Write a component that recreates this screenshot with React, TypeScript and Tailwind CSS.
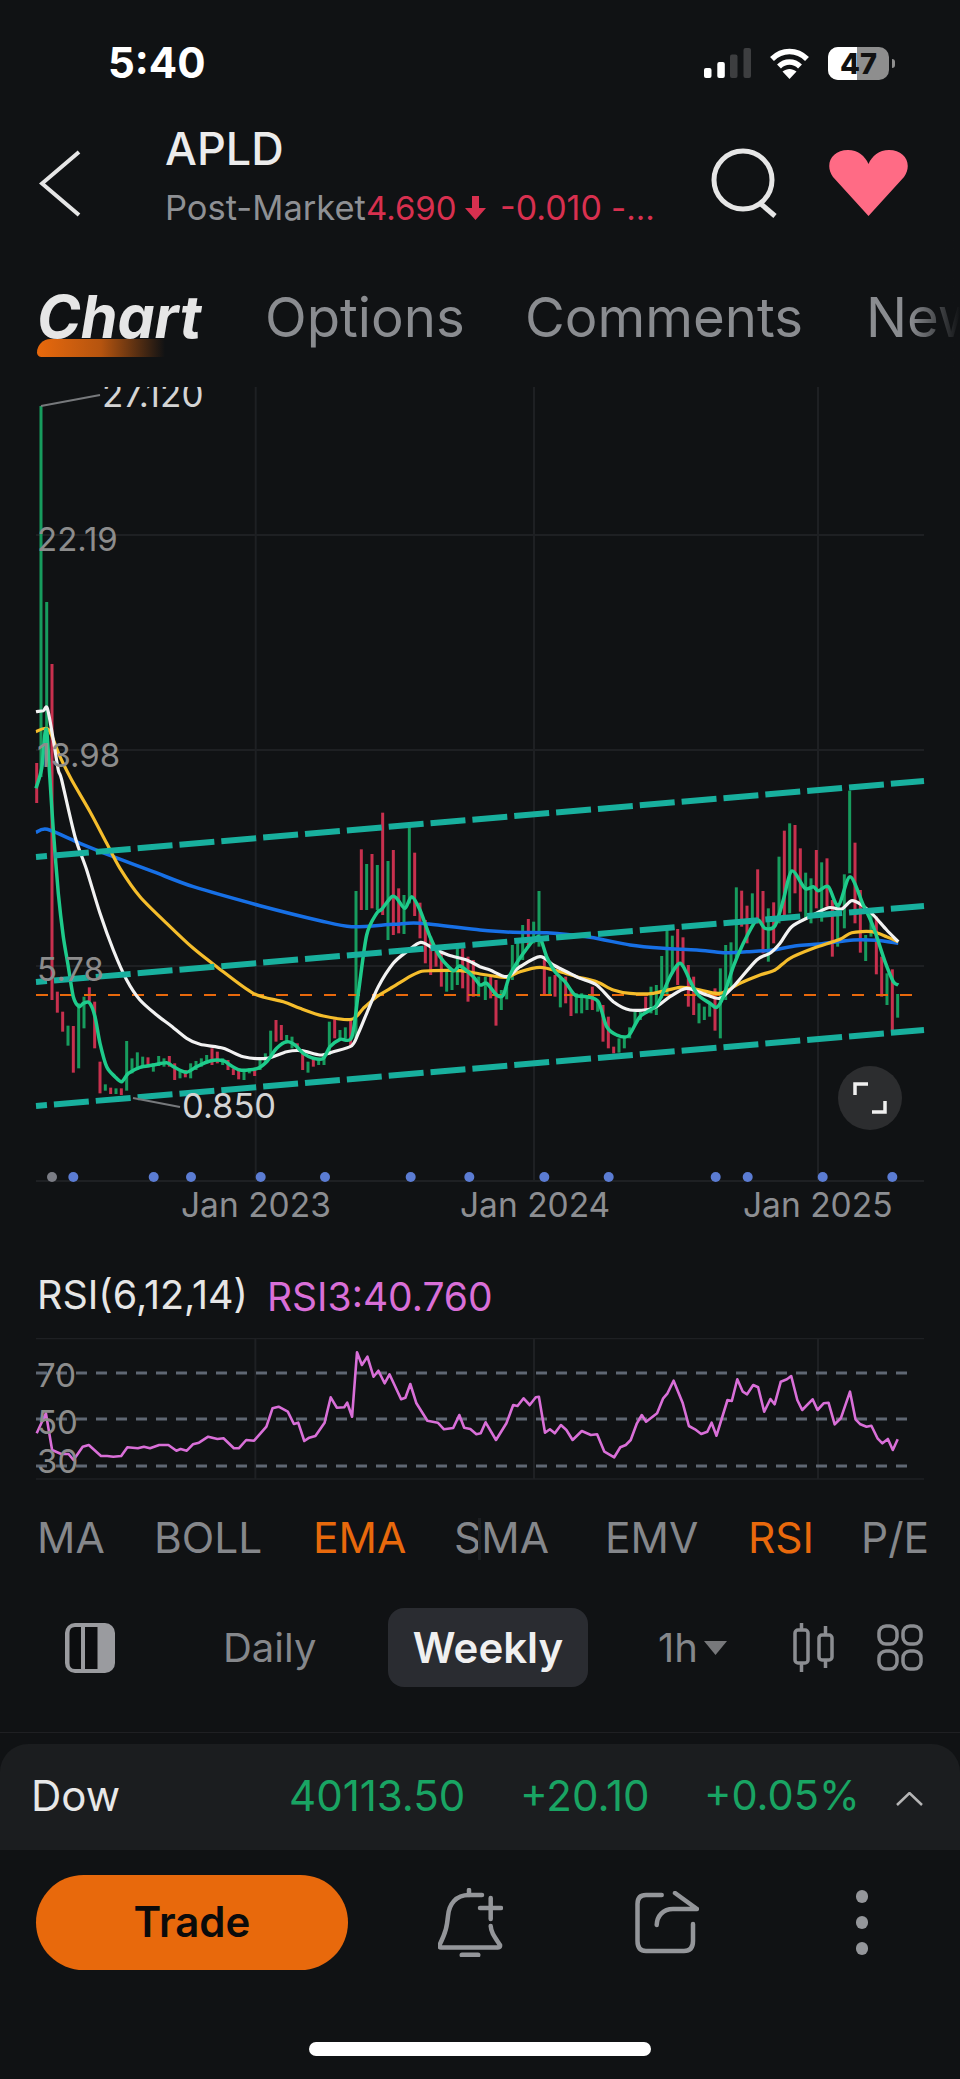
import React from "react";

type Pt = [number, number];
const z2 = (a: number[]): Pt[] => chunk(a).map(([x, y]) => [x / 3, y / 3 + 380]);
const z4 = (a: number[]): Pt[] => chunk(a).map(([x, y]) => [x / 3, y / 3 + 780]);
const z3 = (a: number[]): Pt[] => chunk(a).map(([x, y]) => [x / 3 + 480, y / 3 + 740]);
const z5 = (a: number[]): Pt[] => chunk(a).map(([x, y]) => [x / 1.633, y / 3 + 1250]);
function chunk(a: number[]): Pt[] {
  const out: Pt[] = [];
  for (let i = 0; i < a.length; i += 2) out.push([a[i], a[i + 1]]);
  return out;
}
const pts = (p: Pt[]) => p.map(([x, y]) => `${x.toFixed(1)},${y.toFixed(1)}`).join(" ");
// Catmull-Rom spline through the points, for the moving-average curves
function smooth(p: Pt[]) {
  let d = `M${p[0][0].toFixed(1)} ${p[0][1].toFixed(1)}`;
  for (let i = 0; i < p.length - 1; i++) {
    const a = p[Math.max(i - 1, 0)];
    const b = p[i];
    const c = p[i + 1];
    const e = p[Math.min(i + 2, p.length - 1)];
    const c1x = b[0] + (c[0] - a[0]) / 7;
    const c1y = b[1] + (c[1] - a[1]) / 7;
    const c2x = c[0] - (e[0] - b[0]) / 7;
    const c2y = c[1] - (e[1] - b[1]) / 7;
    d += `C${c1x.toFixed(1)} ${c1y.toFixed(1)} ${c2x.toFixed(1)} ${c2y.toFixed(1)} ${c[0].toFixed(1)} ${c[1].toFixed(1)}`;
  }
  return d;
}

const RED = "#c8304e";
const GRN = "#179c5e";
type B = [number, number, number, "r" | "g"];

const barsA: B[] = [
  [36.7, 763, 803, "r"],
  [41, 406, 777, "g"],
  [46.7, 602, 760, "g"],
  [52, 664, 1000, "r"],
];
const barsZ4: B[] = [
  [172, 635, 698, "r"], [188, 695, 755, "r"], [204, 737, 797, "g"], [220, 738, 878, "r"], [236, 670, 865, "g"],
  [252, 650, 745, "g"], [268, 622, 665, "r"], [284, 665, 805, "r"], [300, 845, 940, "r"], [316, 913, 932, "g"],
  [332, 923, 942, "r"], [348, 925, 942, "g"], [364, 925, 945, "r"], [380, 783, 932, "g"], [396, 835, 880, "g"],
  [412, 817, 870, "g"], [428, 830, 860, "g"], [444, 832, 862, "r"], [460, 850, 875, "g"], [476, 828, 858, "g"],
  [492, 835, 860, "g"], [508, 828, 860, "r"], [524, 850, 900, "r"], [540, 870, 895, "g"], [556, 870, 892, "r"],
  [572, 850, 895, "g"], [588, 843, 870, "g"], [604, 835, 860, "g"], [620, 825, 850, "g"], [636, 805, 855, "r"],
  [652, 815, 850, "r"], [668, 835, 855, "g"], [684, 840, 870, "r"], [700, 865, 885, "r"], [716, 870, 898, "r"],
  [732, 868, 900, "g"], [748, 865, 880, "g"], [764, 865, 888, "r"], [780, 835, 870, "g"], [796, 820, 850, "g"],
  [812, 752, 825, "g"], [828, 720, 785, "r"], [844, 735, 780, "r"], [860, 765, 790, "g"], [876, 770, 805, "g"],
  [892, 790, 815, "r"], [908, 820, 870, "r"], [924, 845, 878, "g"], [940, 835, 860, "r"], [956, 835, 855, "g"],
  [972, 830, 855, "g"], [988, 725, 825, "g"], [1004, 718, 775, "r"], [1020, 750, 780, "g"], [1036, 742, 775, "g"],
  [1052, 720, 800, "r"], [1068, 333, 775, "g"], [1084, 208, 390, "r"], [1100, 252, 390, "g"], [1116, 222, 385, "r"],
  [1132, 255, 390, "g"], [1148, 98, 405, "r"], [1164, 243, 480, "g"], [1180, 210, 465, "r"], [1196, 325, 460, "r"],
  [1212, 345, 462, "g"], [1228, 142, 370, "g"], [1244, 218, 408, "r"], [1260, 368, 475, "r"], [1276, 420, 550, "r"],
  [1292, 470, 585, "r"], [1308, 500, 560, "r"], [1324, 515, 620, "r"], [1340, 570, 635, "g"], [1356, 570, 630, "g"],
  [1372, 500, 615, "g"], [1388, 505, 625, "r"], [1404, 530, 665, "r"], [1420, 540, 650, "r"], [1436, 590, 650, "g"],
];
const barsZ3: B[] = [
  [16, 710, 780, "g"], [32, 710, 775, "r"], [48, 720, 857, "r"], [64, 750, 810, "g"], [80, 735, 778, "g"],
  [97, 615, 720, "g"], [113, 605, 690, "g"], [128, 555, 660, "g"], [145, 537, 615, "r"], [161, 545, 610, "g"],
  [177, 453, 620, "g"], [193, 660, 762, "r"], [209, 710, 765, "g"], [225, 705, 770, "r"], [241, 710, 802, "g"],
  [257, 710, 790, "r"], [273, 750, 828, "r"], [289, 760, 820, "g"], [305, 760, 820, "g"], [321, 765, 810, "g"],
  [337, 740, 810, "r"], [353, 785, 815, "g"], [369, 795, 905, "r"], [385, 830, 925, "r"], [401, 920, 940, "r"],
  [417, 895, 938, "g"], [433, 890, 925, "g"], [449, 862, 895, "g"], [465, 815, 855, "g"], [481, 815, 840, "g"],
  [497, 770, 815, "r"], [513, 740, 820, "g"], [529, 735, 825, "g"], [545, 648, 775, "g"], [561, 570, 765, "g"],
  [577, 587, 700, "g"], [593, 567, 735, "r"], [609, 592, 680, "r"], [625, 675, 800, "r"], [641, 710, 825, "r"],
  [657, 790, 850, "g"], [673, 800, 840, "g"], [689, 790, 830, "g"], [705, 745, 872, "r"], [721, 685, 895, "g"],
  [737, 615, 780, "g"], [753, 607, 745, "g"], [769, 442, 660, "g"], [785, 452, 560, "r"], [801, 497, 610, "r"],
  [817, 460, 545, "g"], [833, 388, 550, "r"], [849, 453, 640, "r"], [865, 505, 665, "g"], [881, 487, 610, "r"],
  [897, 350, 550, "g"], [913, 272, 525, "r"], [929, 250, 520, "g"], [945, 255, 460, "r"], [961, 325, 515, "r"],
  [977, 398, 540, "g"], [993, 415, 550, "g"], [1009, 330, 505, "r"], [1025, 367, 545, "g"], [1041, 355, 500, "r"],
  [1057, 480, 650, "r"], [1073, 490, 620, "g"], [1093, 403, 565, "g"], [1109, 152, 400, "g"], [1125, 308, 550, "r"],
  [1141, 450, 638, "r"], [1157, 585, 663, "g"], [1173, 520, 590, "g"], [1189, 530, 703, "r"], [1205, 650, 770, "r"],
  [1221, 700, 795, "g"], [1237, 688, 870, "r"], [1253, 762, 833, "g"],
];
const allBars: B[] = [
  ...barsA,
  ...barsZ4.map(([x, a, b, c]) => [x / 3, a / 3 + 780, b / 3 + 780, c] as B),
  ...barsZ3.map(([x, a, b, c]) => [x / 3 + 480, a / 3 + 740, b / 3 + 740, c] as B),
];

const greenLine: Pt[] = [
  ...z2([108, 1225, 125, 1165, 135, 1060, 141, 1060, 150, 1200]),
  ...z4([160, 150, 175, 340, 190, 470, 205, 560, 220, 650, 237, 680, 250, 670, 268, 668, 285, 710, 300, 790, 320, 860, 345, 890, 365, 905, 385, 880, 420, 862, 460, 855, 500, 848, 520, 860, 558, 877, 590, 860, 630, 843, 670, 842, 690, 855, 720, 870, 770, 866, 800, 845, 830, 805, 860, 785, 885, 795, 910, 820, 940, 835, 970, 835, 990, 800, 1020, 778, 1055, 772, 1075, 640, 1100, 465, 1130, 400, 1145, 388, 1175, 350, 1190, 355, 1215, 385, 1235, 350, 1260, 390, 1290, 470, 1320, 530, 1360, 572, 1380, 558, 1420, 590, 1440, 615]),
  ...z3([20, 730, 50, 765, 70, 765, 90, 705, 130, 640, 175, 590, 200, 650, 225, 695, 255, 725, 285, 765, 320, 770, 355, 785, 380, 860, 410, 885, 445, 888, 480, 830, 530, 795, 570, 710, 595, 672, 610, 680, 650, 760, 690, 790, 710, 802, 730, 770, 760, 680, 790, 610, 830, 540, 855, 565, 885, 557, 910, 480, 935, 393, 975, 445, 1000, 440, 1015, 452, 1045, 440, 1075, 497, 1110, 410, 1150, 495, 1180, 560, 1215, 665, 1240, 725, 1255, 735]),
];
const whiteLine: Pt[] = [
  ...z2([108, 995, 130, 992, 142, 985, 160, 1080, 175, 1170]),
  ...z4([185, 0, 225, 170, 260, 270, 300, 400, 340, 510, 380, 600, 420, 660, 470, 705, 510, 735, 560, 775, 600, 793, 670, 805, 730, 830, 800, 835, 860, 815, 905, 812, 960, 825, 1000, 815, 1055, 797, 1075, 760, 1100, 700, 1135, 620, 1180, 550, 1220, 515, 1262, 487, 1300, 505, 1345, 525, 1400, 540, 1440, 560]),
  ...z3([30, 690, 80, 710, 120, 680, 180, 650, 220, 675, 260, 695, 300, 715, 350, 735, 400, 785, 450, 810, 520, 805, 570, 770, 620, 745, 680, 765, 720, 775, 760, 740, 830, 660, 870, 640, 900, 610, 935, 560, 990, 530, 1045, 503, 1085, 507, 1115, 482, 1145, 495, 1180, 525, 1220, 570, 1255, 605]),
];
const yellowLine: Pt[] = [
  ...z2([108, 1055, 145, 1048, 180, 1130]),
  ...z4([215, 0, 270, 95, 320, 190, 360, 265, 420, 350, 500, 430, 580, 505, 650, 560, 760, 640, 850, 665, 900, 685, 970, 708, 1055, 718, 1090, 685, 1130, 650, 1180, 620, 1220, 595, 1260, 575, 1300, 572, 1380, 572, 1440, 582]),
  ...z3([40, 708, 80, 712, 120, 695, 180, 682, 240, 695, 290, 710, 350, 725, 400, 750, 450, 760, 520, 760, 600, 742, 650, 748, 720, 760, 780, 730, 840, 705, 885, 690, 930, 655, 1000, 625, 1080, 598, 1115, 578, 1175, 575, 1220, 590, 1255, 605]),
];
const blueLine: Pt[] = [
  ...z4([108, 157, 142, 148, 240, 190, 340, 230, 460, 275, 580, 320, 780, 377, 960, 422, 1055, 440, 1180, 433, 1260, 430, 1440, 450]),
  ...z3([100, 577, 200, 578, 330, 592, 450, 615, 550, 625, 650, 630, 730, 638, 800, 635, 880, 630, 950, 617, 1020, 612, 1120, 600, 1190, 601, 1255, 610]),
];
const rsiLine: Pt[] = z5([60, 550, 75, 490, 85, 600, 100, 612, 112, 612, 120, 630, 135, 590, 145, 585, 165, 618, 175, 618, 185, 620, 198, 618, 208, 592, 225, 595, 235, 590, 245, 595, 260, 585, 275, 585, 288, 602, 295, 597, 305, 602, 315, 583, 325, 578, 340, 560, 355, 567, 365, 565, 382, 595, 390, 595, 402, 570, 415, 572, 435, 530, 445, 475, 455, 470, 470, 485, 480, 522, 487, 518, 497, 573, 505, 563, 515, 558, 530, 518, 540, 442, 550, 473, 562, 472, 567, 458, 575, 500, 583, 307, 591, 345, 600, 320, 610, 380, 618, 362, 628, 400, 636, 373, 655, 448, 662, 443, 670, 402, 680, 460, 698, 512, 715, 518, 725, 538, 740, 534, 750, 495, 758, 533, 768, 537, 778, 553, 785, 550, 793, 517, 810, 570, 827, 520, 838, 465, 845, 468, 855, 445, 865, 465, 875, 442, 880, 440, 890, 548, 898, 538, 906, 550, 916, 525, 925, 540, 935, 570, 950, 543, 965, 555, 975, 553, 987, 605, 1003, 622, 1013, 592, 1022, 585, 1030, 570, 1040, 520, 1048, 495, 1055, 515, 1073, 490, 1083, 445, 1090, 430, 1100, 392, 1115, 460, 1125, 528, 1135, 538, 1145, 552, 1155, 545, 1162, 518, 1170, 557, 1188, 450, 1195, 453, 1204, 388, 1213, 425, 1220, 433, 1230, 405, 1238, 412, 1248, 485, 1258, 447, 1265, 463, 1275, 395, 1285, 388, 1292, 378, 1302, 450, 1310, 480, 1327, 448, 1335, 480, 1345, 460, 1353, 458, 1363, 523, 1373, 505, 1388, 425, 1397, 508, 1405, 523, 1415, 530, 1423, 527, 1433, 565, 1441, 580, 1450, 567, 1458, 600, 1466, 568]);

const dots = [52, 73.3, 153.7, 191, 260.7, 325, 410.7, 469.3, 544.3, 608.7, 715.7, 747.7, 822.7, 892.3];

function PriceChart() {
  return (
    <svg viewBox="0 387 960 795" className="block w-[960px] h-[795px]">
      {[535, 750, 966, 1181].map((y) => (
        <line key={y} x1={36} x2={924} y1={y} y2={y} stroke="#1e2023" strokeWidth={2} />
      ))}
      {[255.7, 534, 818].map((x) => (
        <line key={x} x1={x} x2={x} y1={387} y2={1182} stroke="#1e2023" strokeWidth={2} />
      ))}
      {allBars.map(([x, a, b, c], i) => (
        <line key={i} x1={x} x2={x} y1={a} y2={b} stroke={c === "r" ? RED : GRN} strokeWidth={3} />
      ))}
      <line x1={36} x2={912} y1={995} y2={995} stroke="#e8690c" strokeWidth={2} strokeDasharray="12 12" />
      <path d={smooth(blueLine)} fill="none" stroke="#1770e6" strokeWidth={3.5} strokeLinejoin="round" />
      <path d={smooth(yellowLine)} fill="none" stroke="#f5bd2c" strokeWidth={3.2} strokeLinejoin="round" />
      <path d={smooth(whiteLine)} fill="none" stroke="#f2f2f2" strokeWidth={3.2} strokeLinejoin="round" />
      <path d={smooth(greenLine)} fill="none" stroke="#1ecb8b" strokeWidth={3.5} strokeLinejoin="round" />
      {[
        [857, 781],
        [982, 906],
        [1106, 1030],
      ].map(([a, b]) => (
        <line key={a} x1={36} x2={924} y1={a} y2={b} stroke="#18b09e" strokeWidth={6} strokeDasharray="35 7" strokeDashoffset={24} />
      ))}
      <line x1={41} y1={406} x2={100} y2={395} stroke="#77797c" strokeWidth={2} />
      <line x1={133} y1={1098} x2={180} y2={1107} stroke="#77797c" strokeWidth={2} />
      {dots.map((x, i) => (
        <circle key={x} cx={x} cy={1177} r={5} fill={i === 0 ? "#7b7d85" : "#5b7cd3"} />
      ))}
    </svg>
  );
}

function RsiChart() {
  return (
    <svg viewBox="0 1338 960 142" className="block w-[960px] h-[142px]">
      {[1338.5, 1479].map((y) => (
        <line key={y} x1={36} x2={924} y1={y} y2={y} stroke="#1e2023" strokeWidth={1.5} />
      ))}
      {[255.4, 534, 818].map((x) => (
        <line key={x} x1={x} x2={x} y1={1338} y2={1479} stroke="#1e2023" strokeWidth={2} />
      ))}
      {[1373, 1419, 1466].map((y) => (
        <line key={y} x1={36} x2={914} y1={y} y2={y} stroke="#5f6773" strokeWidth={3} strokeDasharray="11 9" />
      ))}
      <polyline points={pts(rsiLine)} fill="none" stroke="#d96fd8" strokeWidth={2.6} strokeLinejoin="round" />
    </svg>
  );
}

function Label({ className, children }: { className: string; children: React.ReactNode }) {
  return <span className={`absolute whitespace-nowrap leading-none ${className}`}>{children}</span>;
}

export default function App() {
  return (
    <div className="w-[960px] h-[2079px] overflow-hidden bg-[#101214] font-[Inter,sans-serif] text-white flex flex-col">
      {/* status bar */}
      <div className="h-[126px] shrink-0 flex items-center pl-[108px] pr-[65px]">
        <span className="text-[42px] font-bold leading-none">5:40</span>
        <div className="ml-auto flex items-center gap-[18px]">
          <svg width="47" height="30" viewBox="0 0 47 30">
            <rect x="0" y="20" width="7.5" height="10" rx="2" fill="#fff" />
            <rect x="13.3" y="14" width="7.5" height="16" rx="2" fill="#fff" />
            <rect x="26" y="6.5" width="7.5" height="23.5" rx="2" fill="#3d3e40" />
            <rect x="39.5" y="0" width="7.5" height="30" rx="2" fill="#3d3e40" />
          </svg>
          <svg width="41" height="31" viewBox="0 0 41 31" fill="none" stroke="#fff" strokeWidth="5.5">
            <path d="M3 11 C13 1 28 1 38 11" />
            <path d="M10 18.5 C16 12.5 25 12.5 31 18.5" />
            <path d="M20.5 31 L13.5 23.5 C18 20 23 20 27.5 23.5 Z" fill="#fff" stroke="none" />
          </svg>
          <div className="flex items-center">
            <div className="relative w-[61px] h-[33px] rounded-[10px] bg-[#8e8e8e] overflow-hidden flex items-center justify-center">
              <div className="absolute left-0 top-0 h-full w-[29px] bg-white" />
              <span className="relative text-[29px] font-extrabold leading-none text-[#111]">47</span>
            </div>
            <div className="ml-[3px] w-[3px] h-[9px] rounded-r-full bg-[#8e8e8e]" />
          </div>
        </div>
      </div>

      {/* nav */}
      <div className="h-[114px] shrink-0 flex items-center pl-[39px] pr-[51px]">
        <svg width="42" height="67" viewBox="0 0 42 67" fill="none" stroke="#e6e6e6" strokeWidth="4">
          <path d="M40 2 L3 33.5 L40 65" />
        </svg>
        <div className="self-start ml-[84px] flex flex-col gap-[17px]">
          <span className="text-[45px] leading-[45px] font-medium text-[#ececec]">APLD</span>
          <div className="flex items-center h-[40px] text-[33px] leading-none whitespace-nowrap">
            <span className="text-[#8e9094] text-[34.5px] w-[201px]">Post-Market</span>
            <span className="text-[#d8304f] w-[99px]">4.690</span>
            <svg width="21" height="24" viewBox="0 0 21 24" fill="#d8304f">
              <path d="M7 0 H14 V12 H21 L10.5 24 L0 12 H7 Z" />
            </svg>
            <span className="text-[#d8304f] text-[34px] ml-[14px] w-[111px]">-0.010</span>
            <span className="text-[#d8304f]">-...</span>
          </div>
        </div>
        <div className="ml-auto flex items-center gap-[50px]">
          <svg width="67" height="70" viewBox="0 0 67 70" fill="none" stroke="#e6e6e6" strokeWidth="5">
            <circle cx="32" cy="32" r="29" />
            <path d="M50 56 L64 68" />
          </svg>
          <svg width="81" height="66" viewBox="0 0 81 66" fill="#ff6b85">
            <path d="M40.5 66 L5 27 C-4 14 4 0 20 0 C30 0 37 6 40.5 14 C44 6 51 0 61 0 C77 0 85 14 76 27 Z" />
          </svg>
        </div>
      </div>

      {/* tabs */}
      <div className="relative h-[147px] shrink-0 pt-[47px] pl-[37px] flex items-start text-[54.5px] leading-[60px] text-[#8a8c90] whitespace-nowrap overflow-hidden">
        <div className="relative w-[228px] shrink-0">
          <span className="italic font-bold text-[#e6e6e6] text-[59px]">Chart</span>
          <div className="absolute left-0 top-[52px] h-[18px] w-[128px] rounded-tl-[18px] rounded-bl-[6px] bg-gradient-to-r from-[#e8690c] via-[#b5540f] to-transparent" />
        </div>
        <span className="w-[260px] shrink-0">Options</span>
        <span className="w-[341px] shrink-0">Comments</span>
        <span className="shrink-0">News</span>
        <div className="absolute right-0 top-0 h-full w-[50px] bg-gradient-to-r from-transparent to-[#101214]" />
      </div>

      {/* price chart */}
      <div className="relative h-[795px] shrink-0 overflow-hidden">
        <PriceChart />
        <Label className="left-[102px] top-[-10px] text-[35px] text-[#d4d4d4]">27.120</Label>
        <Label className="left-[37px] top-[136px] text-[33px] text-[#8c8c8c]">22.19</Label>
        <Label className="left-[37px] top-[352px] text-[33px] text-[#8c8c8c]">13.98</Label>
        <Label className="left-[37px] top-[566px] text-[33px] text-[#8c8c8c]">5.78</Label>
        <Label className="left-[182px] top-[702px] text-[34.5px] text-[#d4d4d4]">0.850</Label>
        <div className="absolute left-[838px] top-[679px] w-[64px] h-[64px] rounded-full bg-[#2c2d2f] flex items-center justify-center">
          <svg width="34" height="32" viewBox="0 0 34 32" fill="none" stroke="#f0f0f0" strokeWidth="3.5">
            <path d="M15 2 H2 V13" />
            <path d="M19 30 H32 V19" />
          </svg>
        </div>
      </div>

      {/* date axis */}
      <div className="h-[48px] shrink-0 flex items-center pl-[181px] text-[33.5px] leading-none text-[#8c8e92] whitespace-nowrap">
        <span className="w-[279px]">Jan 2023</span>
        <span className="w-[283px]">Jan 2024</span>
        <span>Jan 2025</span>
      </div>

      {/* rsi title */}
      <div className="mt-[42px] h-[48px] shrink-0 flex items-center pl-[37px] leading-none whitespace-nowrap">
        <span className="text-[#e6e6e6] text-[39.5px] w-[230px]">RSI(6,12,14)</span>
        <span className="text-[#d96fd8] text-[39px]">RSI3:40.760</span>
      </div>

      {/* rsi chart */}
      <div className="relative mt-[18px] h-[142px] shrink-0">
        <RsiChart />
        <Label className="left-[37px] top-[21px] text-[33px] text-[#8c8c8c]">70</Label>
        <Label className="left-[37px] top-[68px] text-[33px] text-[#8c8c8c]">50</Label>
        <Label className="left-[37px] top-[107px] text-[33px] text-[#8c8c8c]">30</Label>
      </div>

      {/* indicators */}
      <div className="relative mt-[34px] h-[48px] shrink-0 flex items-center pl-[37px] text-[42.5px] leading-none text-[#85878b] whitespace-nowrap">
        <span className="w-[117px]">MA</span>
        <span className="w-[159px]">BOLL</span>
        <span className="w-[141px] text-[#e8690c]">EMA</span>
        <span className="w-[151px]">SMA</span>
        <span className="w-[143px]">EMV</span>
        <span className="w-[113px] text-[#e8690c]">RSI</span>
        <span>P/E</span>
        <div className="absolute left-[478px] top-[4px] w-[3px] h-[42px] bg-[#1c1e21]" />
      </div>

      {/* toolbar */}
      <div className="mt-[46px] h-[79px] shrink-0 flex items-center pl-[65px] text-[40px] leading-none text-[#85878b] whitespace-nowrap">
        <svg width="50" height="50" viewBox="0 0 50 50">
          <rect x="0" y="0" width="50" height="50" rx="10" fill="#9a9b9f" />
          <path d="M16 4 H10 Q4.5 4 4.5 10 V40 Q4.5 46 10 46 H16 Z" fill="#0c0d0f" />
          <rect x="20" y="4" width="12.5" height="42" fill="#0c0d0f" />
        </svg>
        <span className="ml-[108px] w-[165px]">Daily</span>
        <div className="w-[200px] h-[79px] rounded-[16px] bg-[#2a2c31] flex items-center justify-center">
          <span className="font-semibold text-[42px] text-[#f0f0f0]">Weekly</span>
        </div>
        <span className="ml-[70px] w-[37px]">1h</span>
        <svg className="ml-[9px]" width="23" height="14" viewBox="0 0 23 14" fill="#77787b">
          <path d="M0 0 H23 L11.5 14 Z" />
        </svg>
        <svg className="ml-[66px]" width="41" height="49" viewBox="0 0 41 49" fill="none" stroke="#8b8d91" strokeWidth="3.5">
          <rect x="2" y="7" width="13" height="33" rx="3" />
          <path d="M8.5 0 V7 M8.5 40 V49" />
          <rect x="26" y="12" width="13" height="25" rx="3" />
          <path d="M32.5 3 V12 M32.5 37 V45" />
        </svg>
        <svg className="ml-[43px]" width="46" height="47" viewBox="0 0 46 47" fill="none" stroke="#8b8d91" strokeWidth="3.5">
          <rect x="2" y="2" width="18" height="18" rx="7" />
          <rect x="26" y="2" width="18" height="18" rx="7" />
          <rect x="2" y="27" width="18" height="18" rx="7" />
          <rect x="26" y="27" width="18" height="18" rx="7" />
        </svg>
      </div>

      {/* divider */}
      <div className="mt-[45px] h-px shrink-0 bg-[#1f2023]" />

      {/* dow */}
      <div className="mt-[11px] h-[106px] shrink-0 rounded-t-[28px] bg-[#1b1d1f] flex items-center pl-[31px] pb-[2px] text-[42px] leading-none whitespace-nowrap text-[#19a463]">
        <span className="w-[258px] text-[#e8e8e8]">Dow</span>
        <span className="w-[231px]">40113.50</span>
        <span className="w-[184px]">+20.10</span>
        <span className="w-[192px] text-[41.5px]">+0.05%</span>
        <svg className="mt-[6px]" width="27" height="14" viewBox="0 0 27 14" fill="none" stroke="#b5b5b5" strokeWidth="2.5">
          <path d="M1 13 L13.5 1 L26 13" />
        </svg>
      </div>

      {/* actions */}
      <div className="mt-[25px] h-[95px] shrink-0 flex items-center pl-[36px]">
        <div className="w-[312px] h-[95px] rounded-full bg-[#e8690c] flex items-center justify-center pb-[2px]">
          <span className="text-[42px] font-semibold leading-none text-[#0b0b0b]">Trade</span>
        </div>
        <svg className="ml-[90px]" width="65" height="69" viewBox="0 0 65 69" fill="none" stroke="#94969a" strokeWidth="4.5" strokeLinecap="round">
          <path d="M31 2 V7" />
          <path d="M44 7 H31 C18 7 11 16 10 28 C9 38 8 44 1.5 57 Q1 59.5 3 59.5 H60 Q62.5 59.5 62 57 C56 48 53 44 52.7 38" />
          <path d="M24 67 H40" strokeWidth="5" />
          <path d="M42 20 H63 M52.7 10 V31" />
        </svg>
        <svg className="ml-[132px]" width="64" height="63" viewBox="0 0 64 63" fill="none" stroke="#94969a" strokeWidth="4.5" strokeLinecap="round" strokeLinejoin="round">
          <path d="M26.7 4 H11 Q2.5 4 2.5 13 V50 Q2.5 60 11 60 H49 Q58 60 58 50 V33" />
          <path d="M40 2 L62 18 H38 C28 18 22 25 21.7 34" />
        </svg>
        <div className="ml-[157px] flex flex-col gap-[13px]">
          <div className="w-[12px] h-[13px] rounded-full bg-[#94969a]" />
          <div className="w-[12px] h-[13px] rounded-full bg-[#94969a]" />
          <div className="w-[12px] h-[13px] rounded-full bg-[#94969a]" />
        </div>
      </div>

      {/* home indicator */}
      <div className="mt-[72px] ml-[309px] w-[342px] h-[14px] shrink-0 rounded-full bg-white" />
    </div>
  );
}
